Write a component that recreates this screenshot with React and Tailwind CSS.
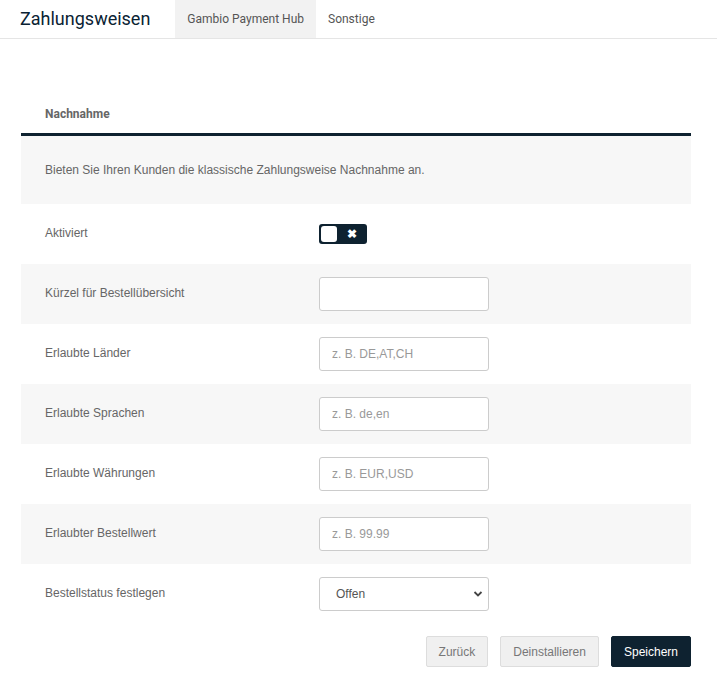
import React from 'react';

const rows = [
    { label: 'Kürzel für Bestellübersicht', placeholder: '' },
    { label: 'Erlaubte Länder', placeholder: 'z. B. DE,AT,CH' },
    { label: 'Erlaubte Sprachen', placeholder: 'z. B. de,en' },
    { label: 'Erlaubte Währungen', placeholder: 'z. B. EUR,USD' },
    { label: 'Erlaubter Bestellwert', placeholder: 'z. B. 99.99' },
];

export default function App() {
    return (
        <div className="w-[717px] h-[692px] bg-white font-['Liberation_Sans',Arial,sans-serif] overflow-hidden">
            {/* Header */}
            <div className="flex items-stretch h-[39px] border-b border-[#e5e5e5]">
                <h1 className="pl-5 pr-[25px] flex items-center text-[18px] text-[#0a2233] font-['Roboto',sans-serif] leading-none">Zahlungsweisen</h1>
                <div className="flex items-center px-3 bg-[#f2f2f2] text-[12px] text-[#555] font-['Roboto',sans-serif]">Gambio Payment Hub</div>
                <div className="flex items-center px-3 text-[12px] text-[#555] font-['Roboto',sans-serif]">Sonstige</div>
            </div>

            <div className="mx-[21px] w-[670px] mt-[66px]">
                <div className="h-[28px] pl-6 text-[12px] font-bold text-[#666] font-['Roboto',sans-serif] flex items-start">Nachnahme</div>
                <div className="border-t-[3px] border-[#0e2230] bg-[#f7f7f7] h-[71px] pl-6 flex items-center text-[12px] text-[#666]">
                    Bieten Sie Ihren Kunden die klassische Zahlungsweise Nachnahme an.
                </div>

                {/* Aktiviert */}
                <div className="h-[60px] flex items-center">
                    <div className="w-[298px] pl-6 text-[12px] text-[#666] -mt-[3px]">Aktiviert</div>
                    <div className="w-[48px] h-[20px] rounded-[3px] bg-[#0e2230] flex items-center px-[2px] gap-[10px]">
                        <div className="w-[16px] h-[16px] rounded-[3px] bg-white"></div>
                        <span className="text-white text-[12px] font-bold leading-none">✖</span>
                    </div>
                </div>

                {rows.map((row, i) => (
                    <div key={i} className={`h-[60px] flex items-center ${i % 2 === 0 ? 'bg-[#f7f7f7]' : 'bg-white'}`}>
                        <div className="w-[298px] pl-6 text-[12px] text-[#666] -mt-[3px]">{row.label}</div>
                        <input
                            placeholder={row.placeholder}
                            className="w-[170px] h-[34px] border border-[#ccc] rounded-[3px] bg-white px-3 text-[12px] placeholder:text-[#999] outline-none"
                        />
                    </div>
                ))}

                <div className="h-[60px] flex items-center">
                    <div className="w-[298px] pl-6 text-[12px] text-[#666] -mt-[3px]">Bestellstatus festlegen</div>
                    <div className="relative w-[170px] h-[34px] border border-[#ccc] rounded-[3px] bg-white flex items-center pl-4 text-[12px] text-[#555]">
                        Offen
                        <svg className="absolute right-[5px] top-[12px]" width="10" height="8" viewBox="0 0 10 8">
                            <path d="M1.5 2 L5 5.5 L8.5 2" stroke="#444" strokeWidth="1.8" fill="none" />
                        </svg>
                    </div>
                </div>

                <div className="flex justify-end gap-3 mt-3">
                    <button className="h-[31px] px-3 bg-[#f0f0f0] border border-[#ddd] rounded-[2px] text-[12px] text-[#777]">Zurück</button>
                    <button className="h-[31px] px-3 bg-[#f0f0f0] border border-[#ddd] rounded-[2px] text-[12px] text-[#777]">Deinstallieren</button>
                    <button className="h-[31px] px-3 bg-[#0e2230] border border-[#0e2230] rounded-[2px] text-[12px] text-white">Speichern</button>
                </div>
            </div>
        </div>
    );
}
